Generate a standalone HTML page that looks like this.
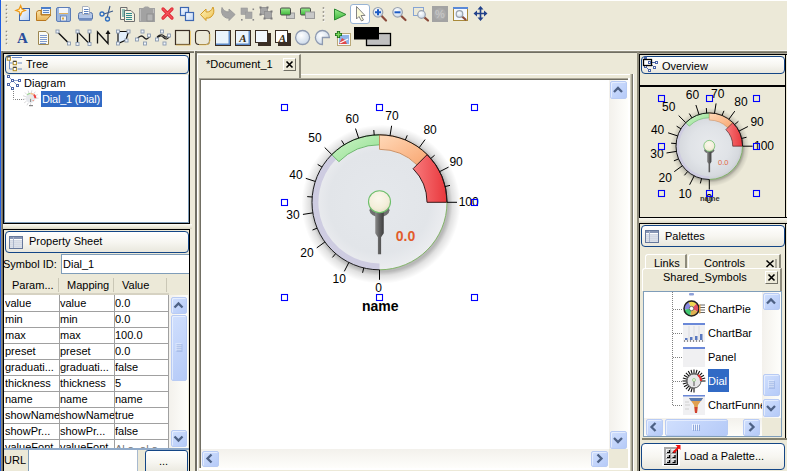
<!DOCTYPE html>
<html><head><meta charset="utf-8"><style>
*{margin:0;padding:0;box-sizing:border-box}
html,body{width:787px;height:471px;overflow:hidden;background:#ECE9D8;font-family:"Liberation Sans",sans-serif;font-size:11px;color:#000;position:relative}
.a{position:absolute}
svg{overflow:visible}
.hdr{position:absolute;border:1px solid #144686;border-radius:4px;background:linear-gradient(#FFFFFF,#F7F6F1 50%,#E9E7DD)}
.t{position:absolute;white-space:nowrap;font-size:11px;line-height:13px}
.sb{position:absolute;border:1px solid #B8CBF4;border-radius:2px;background:linear-gradient(135deg,#D0DFFD,#B5CAF8);box-shadow:inset 1px 1px 0 rgba(255,255,255,0.5)}
</style></head><body>
<div class="a" style="left:0px;top:0px;width:1px;height:471px;background:#1E5DE3"></div>
<div class="a" style="left:1px;top:0px;width:786px;height:1px;background:#FFFFFF"></div>
<svg class="a" style="left:0;top:0" width="787" height="50" font-family="Liberation Serif, serif">
<defs>
<linearGradient id="lb" x1="0" y1="0" x2="1" y2="1"><stop offset="0" stop-color="#FFFFFF"/><stop offset="1" stop-color="#B9D1F4"/></linearGradient>
<linearGradient id="gg" x1="0" y1="0" x2="0" y2="1"><stop offset="0" stop-color="#9BEA8F"/><stop offset="1" stop-color="#3DB83A"/></linearGradient>
<linearGradient id="yl" x1="0" y1="0" x2="1" y2="1"><stop offset="0" stop-color="#FFF6C0"/><stop offset="1" stop-color="#EDC050"/></linearGradient>
<linearGradient id="fo" x1="0" y1="0" x2="0" y2="1"><stop offset="0" stop-color="#FBE3A6"/><stop offset="1" stop-color="#E7B45A"/></linearGradient>
<radialGradient id="mg" cx="0.4" cy="0.35" r="0.7"><stop offset="0" stop-color="#FFFFFF"/><stop offset="1" stop-color="#C9D7E8"/></radialGradient>
</defs>
<rect x="6" y="5" width="2" height="2" fill="#FFFFFF"/><rect x="5.7" y="4.7" width="1.6" height="1.6" fill="#8F8C7E"/>
<rect x="6" y="9" width="2" height="2" fill="#FFFFFF"/><rect x="5.7" y="8.7" width="1.6" height="1.6" fill="#8F8C7E"/>
<rect x="6" y="13" width="2" height="2" fill="#FFFFFF"/><rect x="5.7" y="12.7" width="1.6" height="1.6" fill="#8F8C7E"/>
<rect x="6" y="17" width="2" height="2" fill="#FFFFFF"/><rect x="5.7" y="16.7" width="1.6" height="1.6" fill="#8F8C7E"/>
<rect x="6" y="21" width="2" height="2" fill="#FFFFFF"/><rect x="5.7" y="20.7" width="1.6" height="1.6" fill="#8F8C7E"/>
<rect x="6" y="31" width="2" height="2" fill="#FFFFFF"/><rect x="5.7" y="30.7" width="1.6" height="1.6" fill="#8F8C7E"/>
<rect x="6" y="35" width="2" height="2" fill="#FFFFFF"/><rect x="5.7" y="34.7" width="1.6" height="1.6" fill="#8F8C7E"/>
<rect x="6" y="39" width="2" height="2" fill="#FFFFFF"/><rect x="5.7" y="38.7" width="1.6" height="1.6" fill="#8F8C7E"/>
<rect x="6" y="43" width="2" height="2" fill="#FFFFFF"/><rect x="5.7" y="42.7" width="1.6" height="1.6" fill="#8F8C7E"/>
<rect x="323" y="7.5" width="2" height="2" fill="#FFFFFF"/><rect x="322.7" y="7.2" width="1.6" height="1.6" fill="#8F8C7E"/>
<rect x="323" y="11.5" width="2" height="2" fill="#FFFFFF"/><rect x="322.7" y="11.2" width="1.6" height="1.6" fill="#8F8C7E"/>
<rect x="323" y="15.5" width="2" height="2" fill="#FFFFFF"/><rect x="322.7" y="15.2" width="1.6" height="1.6" fill="#8F8C7E"/>
<rect x="323" y="19.5" width="2" height="2" fill="#FFFFFF"/><rect x="322.7" y="19.2" width="1.6" height="1.6" fill="#8F8C7E"/>
<rect x="19.5" y="8.5" width="10" height="12" fill="url(#lb)" stroke="#3C67B2"/>
<path d="M20.6,5.6 L22,9 L25.4,10.4 L22,11.8 L20.6,15.2 L19.2,11.8 L15.8,10.4 L19.2,9 Z" fill="#FFF3C8" stroke="#F09A18" stroke-width="1.2"/>
<rect x="41.5" y="7.5" width="9" height="7" fill="#EAF3FF" stroke="#B88A3C"/><rect x="41" y="7" width="10" height="2" fill="#4C7FCB"/><path d="M43,10.5h6M43,12.5h6" stroke="#5D86C4"/>
<path d="M36.5,12.5 Q37,10.5 39,10.5 L41,10.5 L41,15 L51,15 L46,20.5 L36.5,20.5 Z" fill="url(#fo)" stroke="#B9771E"/>
<rect x="56.5" y="7.5" width="14" height="14" rx="1.5" fill="#9DB6DC" stroke="#5C7DB8"/><rect x="59" y="8" width="9" height="6" fill="#F2F5FA"/><rect x="59" y="13" width="9" height="1" fill="#E0B060"/><rect x="60.5" y="16" width="6" height="5" fill="#F0F0F0" stroke="#5C7DB8" stroke-width="0.8"/><rect x="62" y="17.5" width="2" height="2" fill="#D9A640"/>
<rect x="78.5" y="12.5" width="14" height="7.5" rx="2" fill="#B3C6E6" stroke="#5473A9"/><rect x="79" y="18" width="13" height="2.5" fill="#6F8CC0"/>
<path d="M82.5,6.5 L88,6.5 L89.5,8 L89.5,14.5 L82.5,14.5 Z" fill="#FFFFFF" stroke="#A0A8B8" stroke-width="0.9"/><path d="M84,9.5h4.5M84,11.5h4.5M84,13.5h4.5" stroke="#4A74B8" stroke-width="0.9"/>
<circle cx="102" cy="14" r="2" fill="none" stroke="#2F6FC0" stroke-width="1.3"/><circle cx="107.5" cy="19" r="2" fill="none" stroke="#2F6FC0" stroke-width="1.3"/><path d="M104,14 L113,11 M107.2,17 L110,6" stroke="#3D5C8C" stroke-width="1.1"/>
<path d="M120.5,7.5 L127,7.5 L127,19.5 L120.5,19.5 Z" fill="#F4F2E2" stroke="#6E6E6E"/><path d="M124.5,10.5 L131,10.5 L134.5,14 L134.5,21.5 L124.5,21.5 Z" fill="#F4F2E2" stroke="#6E6E6E"/>
<path d="M122,10h3M122,12h3M122,14h3M122,16h3M126,13.5h6M126,15.5h6M126,17.5h6M126,19.5h6" stroke="#2F8A8A"/>
<path d="M139,8 L143,8 L145,6.5 L148,6.5 L150,8 L155,8 L155,22 L139,22 Z" fill="#A2A2A2"/><rect x="147" y="14" width="6" height="7" fill="#B4B4B4" stroke="#8A8A8A" stroke-width="0.8"/><path d="M140.5,9v12M153.5,9v4" stroke="#BDBDBD"/>
<path d="M163,9 L172,18 M172,9 L163,18" stroke="#E02834" stroke-width="3.2" stroke-linecap="round"/><path d="M163,9 L172,18 M172,9 L163,18" stroke="#F4555C" stroke-width="1.4" stroke-linecap="round"/>
<rect x="180.5" y="7.5" width="8" height="8" fill="url(#lb)" stroke="#3C67B2" stroke-width="1.2"/><rect x="185.5" y="12.5" width="8" height="8" fill="url(#lb)" stroke="#3C67B2" stroke-width="1.2"/>
<path d="M200.5,14.5 L206,9 L206,12 Q211,12.5 213,7 Q215.5,13 211,17 Q209,18.5 206,18 L206,20.5 Z" fill="url(#yl)" stroke="#D39A24"/>
<path d="M235,14.5 L229,9 L229,12 Q224,12 222,7.5 Q220.5,14 224.5,17 Q226.5,18.5 229,18 L229,20.5 Z" fill="#A4A4A4" stroke="#9A9A9A"/>
<rect x="241" y="8" width="6.5" height="6.5" fill="#A6A6A6" stroke="#999" stroke-width="0.6"/><rect x="245.5" y="12" width="6.5" height="6.5" fill="#A6A6A6" stroke="#999" stroke-width="0.6"/><rect x="241" y="19" width="1.6" height="1.6" fill="#888"/><rect x="252.5" y="8.5" width="1.6" height="1.6" fill="#888"/><rect x="252.5" y="19" width="1.6" height="1.6" fill="#888"/>
<rect x="260.5" y="7.5" width="7" height="7" fill="#A6A6A6" stroke="#8E8E8E" stroke-width="0.8"/><rect x="264.5" y="11.5" width="7" height="7" fill="#A6A6A6" stroke="#8E8E8E" stroke-width="0.8"/>
<rect x="259.5" y="6.5" width="2" height="2" fill="#7A7A7A"/>
<rect x="266.5" y="6.5" width="2" height="2" fill="#7A7A7A"/>
<rect x="259.5" y="13.5" width="2" height="2" fill="#7A7A7A"/>
<rect x="263.5" y="17.5" width="2" height="2" fill="#7A7A7A"/>
<rect x="270.5" y="10.5" width="2" height="2" fill="#7A7A7A"/>
<rect x="270.5" y="17.5" width="2" height="2" fill="#7A7A7A"/>
<rect x="286.5" y="13" width="8" height="5.5" fill="#C8C8C8" stroke="#9A9A9A"/><rect x="280.5" y="8" width="10" height="7" rx="1.2" fill="url(#gg)" stroke="#4A4A4A"/>
<rect x="300.5" y="8" width="10" height="7" rx="1.2" fill="url(#gg)" stroke="#4A4A4A"/><rect x="305.5" y="12" width="9" height="6.5" fill="#C8C8C8" stroke="#9A9A9A"/>
<path d="M334.5,9 L346,14.5 L334.5,20 Z" fill="url(#gg)" stroke="#2C8A32"/>
<rect x="350.5" y="4.5" width="19" height="19" rx="2.5" fill="#FFFFFF" stroke="#98B4D4"/>
<path d="M356.5,6.5 L356.5,19 L359,16.5 L361.5,21 L363.5,20 L361,15.5 L365,15.5 Z" fill="#FAFAD8" stroke="#777" stroke-width="0.9"/>
<path d="M380.9,15.2 L386,20.5" stroke="#8A4A3A" stroke-width="2.2" stroke-linecap="round"/><circle cx="378" cy="12.3" r="4.8" fill="url(#mg)" stroke="#9AA2AE" stroke-width="1.2"/><path d="M375,12.3h6M378,9.3v6" stroke="#1C5BC4" stroke-width="2"/>
<path d="M400.5,15.2 L405.5,20" stroke="#8A4A3A" stroke-width="2.2" stroke-linecap="round"/><circle cx="397.6" cy="12.3" r="4.8" fill="url(#mg)" stroke="#9AA2AE" stroke-width="1.2"/><path d="M394.5,12.3h6" stroke="#1C5BC4" stroke-width="2"/>
<rect x="413.5" y="7.5" width="10" height="8" fill="none" stroke="#1F5FD0" stroke-dasharray="1,1"/>
<path d="M423.8,16.8 L428,20.5" stroke="#8A4A3A" stroke-width="2.2" stroke-linecap="round"/><circle cx="421.5" cy="14.5" r="3.8" fill="url(#mg)" stroke="#9AA2AE" stroke-width="1.2"/>
<rect x="432" y="6" width="16" height="16" fill="#A3A3A3"/><circle cx="440" cy="14" r="6" fill="#ACACAC"/><text x="440" y="18" font-family="Liberation Sans" font-size="11" font-weight="bold" fill="#C4C4C4" text-anchor="middle">%</text>
<rect x="453.5" y="7.5" width="14" height="13" fill="#F4F8FF" stroke="#A98A3A"/><rect x="453" y="7" width="15" height="2" fill="#5A8AD8"/>
<path d="M461.5,16.0 L465.5,19.5" stroke="#8A4A3A" stroke-width="2.2" stroke-linecap="round"/><circle cx="459.5" cy="14" r="3.3" fill="url(#mg)" stroke="#9AA2AE" stroke-width="1.2"/>
<path d="M475.5,13.5 H486 M480.5,8 V19" stroke="#21418A" stroke-width="1.6"/><path d="M480.5,6 L477.5,9.5 L483.5,9.5 Z M480.5,21 L477.5,17.5 L483.5,17.5 Z M473.5,13.5 L477,10.5 L477,16.5 Z M487.5,13.5 L484,10.5 L484,16.5 Z" fill="#21418A"/>
<text x="22.5" y="43" font-size="15" font-weight="bold" fill="#2A4E9C" text-anchor="middle">A</text>
<path d="M38.5,31.5 L46,31.5 L48.5,34 L48.5,44.5 L38.5,44.5 Z" fill="#FBFBF6" stroke="#9C8650"/><path d="M40,35.5h7M40,37.5h7M40,39.5h7M40,41.5h7M40,43.5h6" stroke="#7F9BCF" stroke-width="1"/>
<path d="M58,32.5 L68.5,43" stroke="#111" stroke-width="1.4"/>
<rect x="56.0" y="30.0" width="3" height="3" fill="#F0F4FA" stroke="#8A9AB0" stroke-width="0.9"/><rect x="67.5" y="42.0" width="3" height="3" fill="#F0F4FA" stroke="#8A9AB0" stroke-width="0.9"/>
<path d="M77.5,44 L77.5,31.5 L89.5,44 L89.5,31.5" fill="none" stroke="#111" stroke-width="1.3"/>
<rect x="76.0" y="30.0" width="3" height="3" fill="#F0F4FA" stroke="#8A9AB0" stroke-width="0.9"/><rect x="88.0" y="30.0" width="3" height="3" fill="#F0F4FA" stroke="#8A9AB0" stroke-width="0.9"/><rect x="76.0" y="42.5" width="3" height="3" fill="#F0F4FA" stroke="#8A9AB0" stroke-width="0.9"/><rect x="88.0" y="42.5" width="3" height="3" fill="#F0F4FA" stroke="#8A9AB0" stroke-width="0.9"/>
<path d="M97.5,43.5 L97.5,32 L108,43.5 L108,32" fill="none" stroke="#111" stroke-width="1.3"/><path d="M105.5,34 L108,30 L110.5,34 Z" fill="#111"/>
<path d="M118,31.5 L128.5,31.5 L126,40 L118,43.5 Z" fill="#E4F0FC" stroke="#111" stroke-width="1.2"/>
<rect x="116.5" y="30.0" width="3" height="3" fill="#F0F4FA" stroke="#8A9AB0" stroke-width="0.9"/><rect x="127.0" y="30.0" width="3" height="3" fill="#F0F4FA" stroke="#8A9AB0" stroke-width="0.9"/><rect x="125.0" y="39.0" width="3" height="3" fill="#F0F4FA" stroke="#8A9AB0" stroke-width="0.9"/><rect x="116.5" y="42.0" width="3" height="3" fill="#F0F4FA" stroke="#8A9AB0" stroke-width="0.9"/>
<path d="M137,39 Q141,34 144,37.5 Q147,41 150,36" fill="none" stroke="#222" stroke-width="1.4"/>
<rect x="141.0" y="30.0" width="3" height="3" fill="#F0F4FA" stroke="#8A9AB0" stroke-width="0.9"/><rect x="147.5" y="34.0" width="3" height="3" fill="#F0F4FA" stroke="#8A9AB0" stroke-width="0.9"/><rect x="135.5" y="38.0" width="3" height="3" fill="#F0F4FA" stroke="#8A9AB0" stroke-width="0.9"/><rect x="143.5" y="42.0" width="3" height="3" fill="#F0F4FA" stroke="#8A9AB0" stroke-width="0.9"/>
<path d="M156.5,39 Q160,34 163.5,37.5 Q167,41 170,36 M157,37 Q161,33 164,36 Q167,39 169.5,34" fill="none" stroke="#222" stroke-width="1.1"/>
<rect x="160.5" y="30.0" width="3" height="3" fill="#F0F4FA" stroke="#8A9AB0" stroke-width="0.9"/><rect x="167.5" y="34.0" width="3" height="3" fill="#F0F4FA" stroke="#8A9AB0" stroke-width="0.9"/><rect x="155.5" y="38.0" width="3" height="3" fill="#F0F4FA" stroke="#8A9AB0" stroke-width="0.9"/><rect x="163.0" y="42.0" width="3" height="3" fill="#F0F4FA" stroke="#8A9AB0" stroke-width="0.9"/>
<rect x="175.5" y="30.5" width="14" height="14" fill="#ECE9D8" stroke="#3A2E24" stroke-width="1.2"/><path d="M176,45h14.5V31" fill="none" stroke="#F4C860" stroke-width="0.8"/>
<rect x="195.5" y="30.5" width="14" height="14" rx="3.5" fill="#ECE9D8" stroke="#3A2E24" stroke-width="1.1"/><path d="M209.8,34 V41 Q209.8,44.8 206,44.8 H199" fill="none" stroke="#F4C860" stroke-width="0.9"/>
<rect x="215" y="30" width="16" height="16" fill="#3A2E24"/><rect x="216" y="31" width="14" height="14" fill="#5C8AC8"/><rect x="216" y="31" width="12.5" height="12.5" fill="#EAF4FC"/>
<rect x="235" y="30" width="16" height="16" fill="#3A2E24"/><rect x="236" y="31" width="14" height="14" fill="#5C8AC8"/><rect x="236" y="31" width="12.5" height="12.5" fill="#EAF4FC"/><text x="243" y="42" font-size="11" font-style="italic" font-weight="bold" fill="#3A2E10" text-anchor="middle">A</text>
<rect x="258" y="33" width="13" height="13" fill="#3A2E24"/><rect x="255.5" y="30.5" width="12" height="12" fill="#F2F8FE" stroke="#3A2E24"/>
<rect x="278" y="33" width="13" height="13" fill="#3A2E24"/><rect x="275.5" y="30.5" width="12" height="12" fill="#FFFFFF" stroke="#3A2E24"/><text x="282.5" y="41.5" font-size="11" font-style="italic" font-weight="bold" fill="#3A2E10" text-anchor="middle">A</text>
<circle cx="302.6" cy="37.5" r="7" fill="url(#mg)" stroke="#8E9AB0" stroke-width="1.3"/>
<path d="M322.4,37.5 L322.4,30.5 A7,7 0 0 1 329.4,37.5 Z M322.4,37.5 L329.4,37.5 A7,7 0 1 1 322.4,30.5 Z" fill="none"/><path d="M329.4,37.5 L322.4,37.5 L322.4,44.5 A7,7 0 1 1 329.4,37.5 Z" fill="url(#mg)" stroke="#8E9AB0" stroke-width="1.3"/>
<rect x="337.5" y="33.5" width="13" height="12" fill="#F4F8FC" stroke="#B9A878"/><rect x="339" y="35" width="10" height="9" fill="#8FB4E8"/><path d="M339,44 L342,38 L345,40 L347,44 Z" fill="#E04848"/><path d="M340,43 L348,39" stroke="#fff" stroke-width="1.2"/>
<path d="M335,34.5h7M338.5,31v7" stroke="#1E6A1E" stroke-width="3.2"/><path d="M335.8,34.5h5.4M338.5,31.8v5.4" stroke="#7ADA5A" stroke-width="1.4"/>
<rect x="366.5" y="33.5" width="24" height="12" fill="#C0C0C0" stroke="#000" stroke-width="1.3"/><rect x="354" y="27" width="25" height="12.5" fill="#000"/>
</svg>
<div class="a" style="left:1px;top:50px;width:786px;height:1px;background:#F6F5EE"></div>
<div class="a" style="left:1px;top:51px;width:193px;height:2px;background:linear-gradient(#8E8B7C 50%,#716F64 50%)"></div>
<div class="a" style="left:1px;top:51px;width:2px;height:420px;background:linear-gradient(90deg,#8E8B7C 50%,#716F64 50%)"></div>
<div class="a" style="left:3px;top:53px;width:187px;height:171px;border:1px solid #000;background:#ECE9D8"></div>
<div class="hdr" style="left:5px;top:55px;width:184px;height:19px;"></div>
<div class="t" style="left:26px;top:58px;">Tree</div>
<div class="a" style="left:4px;top:74px;width:185px;height:149px;background:#fff;border:1px solid #7F9DB9;border-top-color:#ECE9D8;border-left:none"></div>
<div class="a" style="left:4px;top:75px;width:1px;height:148px;background:#7F9DB9"></div>
<div class="t" style="left:24px;top:77px;">Diagram</div>
<div class="a" style="left:41px;top:91px;width:61px;height:16px;background:#316AC5"></div>
<div class="t" style="left:42px;top:93px;color:#fff;letter-spacing:-0.2px">Dial_1 (Dial)</div>
<div class="a" style="left:3px;top:229px;width:187px;height:242px;border:1px solid #000;border-bottom:none;background:#ECE9D8"></div>
<div class="hdr" style="left:5px;top:231px;width:184px;height:22px;"></div>
<div class="t" style="left:29px;top:235px;">Property Sheet</div>
<div class="a" style="left:3px;top:224px;width:189px;height:5px;background:linear-gradient(#FBFAF4,#ECE9D8 60%,#D8D4C4)"></div>
<div class="t" style="left:3px;top:258px;">Symbol ID:</div>
<div class="a" style="left:61px;top:254px;width:128px;height:20px;background:#fff;border:1px solid #7F9DB9;border-right:none"></div>
<div class="t" style="left:63px;top:258px;">Dial_1</div>
<div class="a" style="left:4px;top:275px;width:165px;height:20px;background:#ECE9D8;border-bottom:2px solid #D6D2C2"></div>
<div class="a" style="left:58px;top:278px;width:1px;height:14px;background:#CAC7B6"></div>
<div class="a" style="left:113px;top:278px;width:1px;height:14px;background:#CAC7B6"></div>
<div class="a" style="left:166px;top:278px;width:1px;height:14px;background:#CAC7B6"></div>
<div class="t" style="left:12px;top:279px;">Param...</div>
<div class="t" style="left:67px;top:279px;">Mapping</div>
<div class="t" style="left:122px;top:279px;">Value</div>
<div class="a" style="left:4px;top:295px;width:165px;height:153px;background:#fff"></div>
<div class="t" style="left:5px;top:297px;width:54px;overflow:hidden">value</div>
<div class="t" style="left:60px;top:297px;width:54px;overflow:hidden">value</div>
<div class="t" style="left:115px;top:297px;width:53px;overflow:hidden">0.0</div>
<div class="a" style="left:4px;top:311px;width:165px;height:1px;background:#A0A0A0"></div>
<div class="t" style="left:5px;top:313px;width:54px;overflow:hidden">min</div>
<div class="t" style="left:60px;top:313px;width:54px;overflow:hidden">min</div>
<div class="t" style="left:115px;top:313px;width:53px;overflow:hidden">0.0</div>
<div class="a" style="left:4px;top:327px;width:165px;height:1px;background:#A0A0A0"></div>
<div class="t" style="left:5px;top:329px;width:54px;overflow:hidden">max</div>
<div class="t" style="left:60px;top:329px;width:54px;overflow:hidden">max</div>
<div class="t" style="left:115px;top:329px;width:53px;overflow:hidden">100.0</div>
<div class="a" style="left:4px;top:343px;width:165px;height:1px;background:#A0A0A0"></div>
<div class="t" style="left:5px;top:345px;width:54px;overflow:hidden">preset</div>
<div class="t" style="left:60px;top:345px;width:54px;overflow:hidden">preset</div>
<div class="t" style="left:115px;top:345px;width:53px;overflow:hidden">0.0</div>
<div class="a" style="left:4px;top:359px;width:165px;height:1px;background:#A0A0A0"></div>
<div class="t" style="left:5px;top:361px;width:54px;overflow:hidden">graduati...</div>
<div class="t" style="left:60px;top:361px;width:54px;overflow:hidden">graduati...</div>
<div class="t" style="left:115px;top:361px;width:53px;overflow:hidden">false</div>
<div class="a" style="left:4px;top:375px;width:165px;height:1px;background:#A0A0A0"></div>
<div class="t" style="left:5px;top:377px;width:54px;overflow:hidden">thickness</div>
<div class="t" style="left:60px;top:377px;width:54px;overflow:hidden">thickness</div>
<div class="t" style="left:115px;top:377px;width:53px;overflow:hidden">5</div>
<div class="a" style="left:4px;top:391px;width:165px;height:1px;background:#A0A0A0"></div>
<div class="t" style="left:5px;top:393px;width:54px;overflow:hidden">name</div>
<div class="t" style="left:60px;top:393px;width:54px;overflow:hidden">name</div>
<div class="t" style="left:115px;top:393px;width:53px;overflow:hidden">name</div>
<div class="a" style="left:4px;top:407px;width:165px;height:1px;background:#A0A0A0"></div>
<div class="t" style="left:5px;top:409px;width:54px;overflow:hidden">showName</div>
<div class="t" style="left:60px;top:409px;width:54px;overflow:hidden">showName</div>
<div class="t" style="left:115px;top:409px;width:53px;overflow:hidden">true</div>
<div class="a" style="left:4px;top:423px;width:165px;height:1px;background:#A0A0A0"></div>
<div class="t" style="left:5px;top:425px;width:54px;overflow:hidden">showPr...</div>
<div class="t" style="left:60px;top:425px;width:54px;overflow:hidden">showPr...</div>
<div class="t" style="left:115px;top:425px;width:53px;overflow:hidden">false</div>
<div class="a" style="left:4px;top:439px;width:165px;height:1px;background:#A0A0A0"></div>
<div class="t" style="left:5px;top:441px;width:54px;overflow:hidden">valueFont</div>
<div class="t" style="left:60px;top:441px;width:54px;overflow:hidden">valueFont</div>
<div class="t" style="left:115px;top:441px;width:53px;overflow:hidden"><span style='color:#7A7A7A;position:relative;top:2px'>Al&nbsp;a&nbsp;&nbsp;al&nbsp;a</span></div>
<div class="a" style="left:4px;top:455px;width:165px;height:1px;background:#A0A0A0"></div>
<div class="a" style="left:59px;top:295px;width:1px;height:153px;background:#A0A0A0"></div>
<div class="a" style="left:114px;top:295px;width:1px;height:153px;background:#A0A0A0"></div>
<div class="a" style="left:168px;top:295px;width:1px;height:153px;background:#A0A0A0"></div>
<div class="a" style="left:4px;top:448px;width:185px;height:23px;background:#ECE9D8"></div>
<div class="a" style="left:4px;top:448px;width:185px;height:2px;background:#8FA9C8"></div>
<div class="t" style="left:4px;top:454px;">URL</div>
<div class="a" style="left:28px;top:450px;width:110px;height:21px;background:#fff;border-left:1px solid #7F9DB9;border-right:1px solid #A7B9CF"></div>
<div class="a" style="left:169px;top:295px;width:19px;height:153px;background:linear-gradient(90deg,#F3F1EC,#FEFEFB)"></div>
<div class="sb" style="left:171px;top:297px;width:16px;height:17px"><svg width="14" height="15" style="position:absolute;left:0;top:0"><g fill="none" stroke="#4D6185" stroke-width="2.3"><polyline points="2.5,9.5 6.5,5.5 10.5,9.5" /></g></svg></div>
<div class="sb" style="left:171px;top:315px;width:16px;height:66px"><svg width="14" height="64" style="position:absolute;left:0;top:0"><g fill="none" stroke="#4D6185" stroke-width="2.3"><line x1="3.5" y1="28.0" x2="9.5" y2="28.0" stroke-width="1" stroke="#EEF4FE"/><line x1="4.5" y1="29.0" x2="10.5" y2="29.0" stroke-width="1" stroke="#8FA8DC"/><line x1="3.5" y1="30.0" x2="9.5" y2="30.0" stroke-width="1" stroke="#EEF4FE"/><line x1="4.5" y1="31.0" x2="10.5" y2="31.0" stroke-width="1" stroke="#8FA8DC"/><line x1="3.5" y1="32.0" x2="9.5" y2="32.0" stroke-width="1" stroke="#EEF4FE"/><line x1="4.5" y1="33.0" x2="10.5" y2="33.0" stroke-width="1" stroke="#8FA8DC"/><line x1="3.5" y1="34.0" x2="9.5" y2="34.0" stroke-width="1" stroke="#EEF4FE"/><line x1="4.5" y1="35.0" x2="10.5" y2="35.0" stroke-width="1" stroke="#8FA8DC"/></g></svg></div>
<div class="sb" style="left:171px;top:430px;width:16px;height:17px"><svg width="14" height="15" style="position:absolute;left:0;top:0"><g fill="none" stroke="#4D6185" stroke-width="2.3"><polyline points="2.5,5.5 6.5,9.5 10.5,5.5" /></g></svg></div>
<div class="hdr" style="left:145px;top:450px;width:43px;height:24px;border-radius:3px"></div>
<div class="t" style="left:159px;top:455px;">...</div>
<div class="a" style="left:189px;top:229px;width:1px;height:242px;background:#000"></div>
<div class="a" style="left:195px;top:51px;width:443px;height:2px;background:linear-gradient(#8E8B7C 50%,#716F64 50%)"></div>
<div class="a" style="left:195px;top:51px;width:2px;height:420px;background:#716F64"></div>
<div class="a" style="left:197px;top:53px;width:441px;height:418px;background:#ECE9D8"></div>
<div class="a" style="left:197px;top:54px;width:1px;height:417px;background:#FFFFFF"></div>
<div class="a" style="left:197px;top:54px;width:104px;height:24px;border-top:1px solid #fff;border-left:1px solid #fff;border-right:2px solid #8E8B7C;background:#ECE9D8"></div>
<div class="a" style="left:301px;top:74px;width:332px;height:1px;background:#fff"></div>
<div class="t" style="left:206px;top:58px;">*Document_1</div>
<div class="a" style="left:283px;top:58px;width:13px;height:13px;border:1px solid;border-color:#fff #716F64 #716F64 #fff"></div>
<svg class="a" style="left:283px;top:58px" width="13" height="13"><path d="M3.5,3.5 L9.5,9.5 M9.5,3.5 L3.5,9.5" stroke="#000" stroke-width="1.6"/></svg>
<div class="a" style="left:199px;top:78px;width:431px;height:392px;border-top:1px solid #ACA899;border-left:1px solid #ACA899;box-shadow:inset 1px 1px 0 #716F64;background:#fff"></div>
<div class="a" style="left:628px;top:78px;width:2px;height:392px;background:#fff"></div>
<div class="a" style="left:199px;top:468px;width:431px;height:2px;background:#fff"></div>
<div class="a" style="left:630px;top:74px;width:1px;height:397px;background:#D0CDBC"></div>
<div class="a" style="left:631px;top:74px;width:1px;height:397px;background:#A9A695"></div>
<div class="a" style="left:632px;top:74px;width:1px;height:397px;background:#76746A"></div>
<div class="a" style="left:633px;top:74px;width:1px;height:397px;background:#FFFFFF"></div>
<div class="a" style="left:609px;top:80px;width:19px;height:369px;background:linear-gradient(90deg,#F3F1EC,#FEFEFB)"></div>
<div class="sb" style="left:610px;top:81px;width:17px;height:18px"><svg width="15" height="16" style="position:absolute;left:0;top:0"><g fill="none" stroke="#4D6185" stroke-width="2.3"><polyline points="3.0,10.0 7.0,6.0 11.0,10.0" /></g></svg></div>
<div class="sb" style="left:610px;top:431px;width:17px;height:18px"><svg width="15" height="16" style="position:absolute;left:0;top:0"><g fill="none" stroke="#4D6185" stroke-width="2.3"><polyline points="3.0,6.0 7.0,10.0 11.0,6.0" /></g></svg></div>
<div class="a" style="left:201px;top:449px;width:408px;height:19px;background:linear-gradient(#F3F1EC,#FEFEFB)"></div>
<div class="sb" style="left:202px;top:451px;width:17px;height:16px"><svg width="15" height="14" style="position:absolute;left:0;top:0"><g fill="none" stroke="#4D6185" stroke-width="2.3"><polyline points="8.5,2.5 4.5,6.5 8.5,10.5" /></g></svg></div>
<div class="sb" style="left:591px;top:451px;width:17px;height:16px"><svg width="15" height="14" style="position:absolute;left:0;top:0"><g fill="none" stroke="#4D6185" stroke-width="2.3"><polyline points="5.5,2.5 9.5,6.5 5.5,10.5" /></g></svg></div>
<div class="a" style="left:609px;top:449px;width:19px;height:19px;background:#ECE9D8"></div>
<div class="a" style="left:637px;top:51px;width:150px;height:3px;background:linear-gradient(#8E8B7C 33%,#716F64 33%,#716F64 66%,#ACA899 66%)"></div>
<div class="a" style="left:637px;top:51px;width:2px;height:420px;background:#8E8B7C"></div>
<div class="a" style="left:639px;top:54px;width:1px;height:417px;background:#000"></div>
<div class="a" style="left:639px;top:54px;width:148px;height:164px;border:1px solid #000;border-right:none;border-bottom:1px solid #000;background:#ECE9D8"></div>
<div class="a" style="left:785px;top:54px;width:1px;height:164px;background:#000"></div>
<div class="hdr" style="left:641px;top:56px;width:144px;height:18px;"></div>
<div class="t" style="left:662px;top:60px;">Overview</div>
<div class="a" style="left:640px;top:85px;width:146px;height:2px;background:#000"></div>
<div class="a" style="left:639px;top:218px;width:148px;height:5px;background:linear-gradient(#FBFAF4,#ECE9D8 60%,#D8D4C4)"></div>
<div class="a" style="left:639px;top:223px;width:148px;height:216px;border-top:1px solid #000;border-left:1px solid #000;background:#ECE9D8"></div>
<div class="a" style="left:785px;top:223px;width:1px;height:216px;background:#000"></div>
<div class="hdr" style="left:641px;top:225px;width:144px;height:22px;"></div>
<div class="t" style="left:665px;top:230px;">Palettes</div>
<div class="a" style="left:645px;top:254px;width:42px;height:16px;border-top:1px solid #fff;border-left:1px solid #fff;border-right:2px solid #8E8B7C;border-top-left-radius:3px"></div>
<div class="t" style="left:654px;top:257px;">Links</div>
<div class="a" style="left:688px;top:254px;width:93px;height:16px;border-top:1px solid #fff;border-left:1px solid #fff;border-right:2px solid #8E8B7C;border-top-left-radius:3px"></div>
<div class="t" style="left:704px;top:257px;">Controls</div>
<svg class="a" style="left:764px;top:259px" width="13" height="10"><path d="M2.5,1.5 L9.5,8 M9.5,1.5 L2.5,8" stroke="#000" stroke-width="1.5"/><path d="M12,0V10" stroke="#716F64"/></svg>
<div class="a" style="left:642px;top:268px;width:140px;height:23px;border-top:1px solid #fff;border-left:1px solid #fff;border-right:2px solid #8E8B7C;background:#ECE9D8;border-top-left-radius:3px"></div>
<div class="t" style="left:663px;top:271px;">Shared_Symbols</div>
<div class="a" style="left:765px;top:271px;width:13px;height:13px;border:1px solid;border-color:#fff #716F64 #716F64 #fff"></div>
<svg class="a" style="left:765px;top:271px" width="13" height="13"><path d="M3.5,3.5 L9.5,9.5 M9.5,3.5 L3.5,9.5" stroke="#000" stroke-width="1.6"/></svg>
<div class="a" style="left:643px;top:291px;width:139px;height:146px;background:#fff;border:1px solid #7F9DB9"></div>
<div class="t" style="left:708px;top:303px;">ChartPie</div>
<div class="t" style="left:708px;top:327px;">ChartBar</div>
<div class="t" style="left:708px;top:351px;">Panel</div>
<div class="a" style="left:708px;top:369px;width:21px;height:23px;background:#316AC5"></div>
<div class="t" style="left:708px;top:375px;color:#fff">Dial</div>
<div class="t" style="left:708px;top:399px;">ChartFunnel</div>
<div class="a" style="left:762px;top:292px;width:19px;height:126px;background:linear-gradient(90deg,#F3F1EC,#FEFEFB)"></div>
<div class="sb" style="left:763px;top:293px;width:17px;height:17px"><svg width="15" height="15" style="position:absolute;left:0;top:0"><g fill="none" stroke="#4D6185" stroke-width="2.3"><polyline points="3.0,9.5 7.0,5.5 11.0,9.5" /></g></svg></div>
<div class="sb" style="left:763px;top:374px;width:17px;height:22px"><svg width="15" height="20" style="position:absolute;left:0;top:0"><g fill="none" stroke="#4D6185" stroke-width="2.3"><line x1="4.0" y1="6.0" x2="10.0" y2="6.0" stroke-width="1" stroke="#EEF4FE"/><line x1="5.0" y1="7.0" x2="11.0" y2="7.0" stroke-width="1" stroke="#8FA8DC"/><line x1="4.0" y1="8.0" x2="10.0" y2="8.0" stroke-width="1" stroke="#EEF4FE"/><line x1="5.0" y1="9.0" x2="11.0" y2="9.0" stroke-width="1" stroke="#8FA8DC"/><line x1="4.0" y1="10.0" x2="10.0" y2="10.0" stroke-width="1" stroke="#EEF4FE"/><line x1="5.0" y1="11.0" x2="11.0" y2="11.0" stroke-width="1" stroke="#8FA8DC"/><line x1="4.0" y1="12.0" x2="10.0" y2="12.0" stroke-width="1" stroke="#EEF4FE"/><line x1="5.0" y1="13.0" x2="11.0" y2="13.0" stroke-width="1" stroke="#8FA8DC"/></g></svg></div>
<div class="sb" style="left:763px;top:399px;width:17px;height:18px"><svg width="15" height="16" style="position:absolute;left:0;top:0"><g fill="none" stroke="#4D6185" stroke-width="2.3"><polyline points="3.0,6.0 7.0,10.0 11.0,6.0" /></g></svg></div>
<div class="a" style="left:644px;top:418px;width:118px;height:18px;background:linear-gradient(#F3F1EC,#FEFEFB)"></div>
<div class="sb" style="left:646px;top:419px;width:17px;height:17px"><svg width="15" height="15" style="position:absolute;left:0;top:0"><g fill="none" stroke="#4D6185" stroke-width="2.3"><polyline points="8.5,3.0 4.5,7.0 8.5,11.0" /></g></svg></div>
<div class="sb" style="left:665px;top:419px;width:63px;height:17px"><svg width="61" height="15" style="position:absolute;left:0;top:0"><g fill="none" stroke="#4D6185" stroke-width="2.3"><line y1="4.0" x1="26.5" y2="10.0" x2="26.5" stroke-width="1" stroke="#EEF4FE"/><line y1="5.0" x1="27.5" y2="11.0" x2="27.5" stroke-width="1" stroke="#8FA8DC"/><line y1="4.0" x1="28.5" y2="10.0" x2="28.5" stroke-width="1" stroke="#EEF4FE"/><line y1="5.0" x1="29.5" y2="11.0" x2="29.5" stroke-width="1" stroke="#8FA8DC"/><line y1="4.0" x1="30.5" y2="10.0" x2="30.5" stroke-width="1" stroke="#EEF4FE"/><line y1="5.0" x1="31.5" y2="11.0" x2="31.5" stroke-width="1" stroke="#8FA8DC"/><line y1="4.0" x1="32.5" y2="10.0" x2="32.5" stroke-width="1" stroke="#EEF4FE"/><line y1="5.0" x1="33.5" y2="11.0" x2="33.5" stroke-width="1" stroke="#8FA8DC"/></g></svg></div>
<div class="sb" style="left:743px;top:419px;width:17px;height:17px"><svg width="15" height="15" style="position:absolute;left:0;top:0"><g fill="none" stroke="#4D6185" stroke-width="2.3"><polyline points="5.5,3.0 9.5,7.0 5.5,11.0" /></g></svg></div>
<div class="a" style="left:762px;top:418px;width:19px;height:18px;background:#ECE9D8"></div>
<div class="a" style="left:642px;top:438px;width:145px;height:2px;background:#85826F"></div>
<div class="a" style="left:785px;top:223px;width:1px;height:215px;background:#000"></div>
<div class="hdr" style="left:641px;top:443px;width:144px;height:27px;"></div>
<div class="t" style="left:684px;top:450px;">Load a Palette...</div>
<svg class="a" style="left:0;top:0" width="787" height="471">
<path d="M9.5,60 V69 M9.5,63 H13 M9.5,69 H13 M12,57.5 H22 M17.5,63 H22 M17.5,69 H22" stroke="#6E8CC4" stroke-width="1" fill="none"/>
<rect x="7.199999999999999" y="56.8" width="3.2" height="3.4" fill="#fff" stroke="#B08A20" stroke-width="1"/><rect x="7.199999999999999" y="56.3" width="3.2" height="1" fill="#1A2A50"/>
<rect x="13.2" y="61.3" width="3.2" height="3.4" fill="#fff" stroke="#B08A20" stroke-width="1"/><rect x="13.2" y="60.8" width="3.2" height="1" fill="#1A2A50"/>
<rect x="13.2" y="67.3" width="3.2" height="3.4" fill="#fff" stroke="#B08A20" stroke-width="1"/><rect x="13.2" y="66.8" width="3.2" height="1" fill="#1A2A50"/>
<path d="M8.5,76.5 L12.5,80.5 L19.5,80.5 M12.5,80.5 L8.5,84.5 L12.5,88.5 M12.5,80.5 L17.5,85.5" stroke="#7088C0" stroke-width="0.8" fill="none"/>
<rect x="7.5" y="75.5" width="2" height="2" fill="#FFFFFF" stroke="#4A64A8" stroke-width="1"/>
<rect x="11.5" y="79.5" width="2" height="2" fill="#FFFFFF" stroke="#4A64A8" stroke-width="1"/>
<rect x="18.5" y="79.5" width="2" height="2" fill="#FFFFFF" stroke="#4A64A8" stroke-width="1"/>
<rect x="7.5" y="83.5" width="2" height="2" fill="#FFFFFF" stroke="#4A64A8" stroke-width="1"/>
<rect x="16.5" y="84.5" width="2" height="2" fill="#FFFFFF" stroke="#4A64A8" stroke-width="1"/>
<rect x="11.5" y="87.5" width="2" height="2" fill="#FFFFFF" stroke="#4A64A8" stroke-width="1"/>
<path d="M13.5,91 V99.5 H24" stroke="#808080" stroke-width="1" stroke-dasharray="1,1" fill="none"/>
<g stroke="#C8C8CC" stroke-width="0.7"><line x1="30.60" y1="103.20" x2="30.60" y2="106.20"/><line x1="28.33" y1="102.66" x2="26.97" y2="105.33"/><line x1="26.55" y1="101.14" x2="24.13" y2="102.90"/><line x1="25.66" y1="98.98" x2="22.70" y2="99.45"/><line x1="25.84" y1="96.65" x2="22.99" y2="95.73"/><line x1="27.06" y1="94.66" x2="24.94" y2="92.54"/><line x1="29.05" y1="93.44" x2="28.13" y2="90.59"/><line x1="31.38" y1="93.26" x2="31.85" y2="90.30"/><line x1="33.54" y1="94.15" x2="35.30" y2="91.73"/><line x1="35.06" y1="95.93" x2="37.73" y2="94.57"/><line x1="35.60" y1="98.20" x2="38.60" y2="98.20"/></g>
<circle cx="30.6" cy="98.2" r="4.8" fill="#E6E8EC"/><path d="M27.2,94.8 A4.8,4.8 0 0 1 30.6,93.4" stroke="#9BD48F" stroke-width="1.3" fill="none"/><path d="M30.6,93.4 A4.8,4.8 0 0 1 34,94.8" stroke="#F7B98A" stroke-width="1.5" fill="none"/><path d="M34,94.8 A4.8,4.8 0 0 1 35.4,98.2" stroke="#EE4040" stroke-width="2" fill="none"/><path d="M30.6,98.5V102" stroke="#7A7A7A" stroke-width="0.9"/><circle cx="30.6" cy="97.8" r="0.9" fill="#F4F0C0"/><rect x="29" y="105" width="4" height="1.2" fill="#888"/><rect x="32.5" y="100" width="1.5" height="1" fill="#F0A090"/>
<rect x="9.5" y="236.5" width="13" height="12" fill="#FFFFFF" stroke="#66789C"/>
<rect x="10" y="237" width="12" height="2" fill="#8896B4"/>
<rect x="10" y="240.5" width="12" height="0.9" fill="#A9B4CA"/>
<rect x="10" y="242.5" width="12" height="0.9" fill="#A9B4CA"/>
<rect x="10" y="244.5" width="12" height="0.9" fill="#A9B4CA"/>
<rect x="10" y="246.5" width="12" height="0.9" fill="#A9B4CA"/>
<rect x="13" y="237" width="1" height="11" fill="#A9B4CA"/>
<rect x="645.5" y="230.5" width="13" height="12" fill="#FFFFFF" stroke="#66789C"/>
<rect x="646" y="231" width="12" height="2" fill="#8896B4"/>
<rect x="646" y="234.5" width="12" height="0.9" fill="#A9B4CA"/>
<rect x="646" y="236.5" width="12" height="0.9" fill="#A9B4CA"/>
<rect x="646" y="238.5" width="12" height="0.9" fill="#A9B4CA"/>
<rect x="646" y="240.5" width="12" height="0.9" fill="#A9B4CA"/>
<rect x="649" y="231" width="1" height="11" fill="#A9B4CA"/>
<path d="M649.5,62.5 L656.5,62.5 M645.5,66.5 L649.5,70.5 M649.5,62.5 L654.5,67.5" stroke="#4A64A8" stroke-width="1" fill="none"/>
<rect x="644.5" y="57" width="2" height="2" fill="#FFFFFF" stroke="#4A64A8" stroke-width="1"/>
<rect x="655.5" y="61.5" width="2" height="2" fill="#FFFFFF" stroke="#4A64A8" stroke-width="1"/>
<rect x="644.5" y="65.5" width="2" height="2" fill="#FFFFFF" stroke="#4A64A8" stroke-width="1"/>
<rect x="653.5" y="66.5" width="2" height="2" fill="#FFFFFF" stroke="#4A64A8" stroke-width="1"/>
<rect x="648.5" y="69.5" width="2" height="2" fill="#FFFFFF" stroke="#4A64A8" stroke-width="1"/>
<rect x="643.5" y="59.5" width="8" height="6" fill="#fff" stroke="#000" stroke-width="1.3"/><rect x="648.5" y="61.5" width="2" height="2" fill="#FFFFFF" stroke="#4A64A8" stroke-width="1"/>
<rect x="662" y="445" width="18" height="21" fill="#FFFFFF"/><rect x="664" y="447" width="14" height="18" fill="#A8A8A8"/><path d="M664,464.5 H677.5 V447" fill="none" stroke="#000" stroke-width="1"/>
<rect x="666.0" y="449" width="4" height="4" fill="#C8C8C8"/><path d="M666.0,449.5 H670.0 M666.5,449 V453" stroke="#F0F0F0" stroke-width="1"/><path d="M667.0,452.5 H670.0 M669.5,450 V453" stroke="#000" stroke-width="1.2"/>
<rect x="671.5" y="449" width="4" height="4" fill="#C8C8C8"/><path d="M671.5,449.5 H675.5 M672.0,449 V453" stroke="#F0F0F0" stroke-width="1"/><path d="M672.5,452.5 H675.5 M675.0,450 V453" stroke="#000" stroke-width="1.2"/>
<rect x="666.0" y="454" width="4" height="4" fill="#C8C8C8"/><path d="M666.0,454.5 H670.0 M666.5,454 V458" stroke="#F0F0F0" stroke-width="1"/><path d="M667.0,457.5 H670.0 M669.5,455 V458" stroke="#000" stroke-width="1.2"/>
<rect x="671.5" y="454" width="4" height="4" fill="#C8C8C8"/><path d="M671.5,454.5 H675.5 M672.0,454 V458" stroke="#F0F0F0" stroke-width="1"/><path d="M672.5,457.5 H675.5 M675.0,455 V458" stroke="#000" stroke-width="1.2"/>
<rect x="666.0" y="459" width="4" height="4" fill="#C8C8C8"/><path d="M666.0,459.5 H670.0 M666.5,459 V463" stroke="#F0F0F0" stroke-width="1"/><path d="M667.0,462.5 H670.0 M669.5,460 V463" stroke="#000" stroke-width="1.2"/>
<rect x="671.5" y="459" width="4" height="4" fill="#C8C8C8"/><path d="M671.5,459.5 H675.5 M672.0,459 V463" stroke="#F0F0F0" stroke-width="1"/><path d="M672.5,462.5 H675.5 M675.0,460 V463" stroke="#000" stroke-width="1.2"/>
<path d="M673.5,452.5 L679,447" stroke="#F01010" stroke-width="2"/><path d="M675.5,445 L680.5,445 L680.5,450 Z" fill="#F01010"/>
<path d="M672.5,292 V406" stroke="#808080" stroke-dasharray="1,1" fill="none"/>
<path d="M673,309.5 H682" stroke="#808080" stroke-dasharray="1,1" fill="none"/>
<path d="M673,333.5 H682" stroke="#808080" stroke-dasharray="1,1" fill="none"/>
<path d="M673,357.5 H682" stroke="#808080" stroke-dasharray="1,1" fill="none"/>
<path d="M673,381.5 H682" stroke="#808080" stroke-dasharray="1,1" fill="none"/>
<path d="M673,405.5 H682" stroke="#808080" stroke-dasharray="1,1" fill="none"/>
<rect x="689" y="293" width="5" height="2.5" rx="1" fill="#8EA0D8"/>
<path d="M691.5,308.5 L688.21,301.76 A7.5,7.5 0 0 1 696.90,303.29 Z" fill="#F0D850"/>
<path d="M691.5,308.5 L696.90,303.29 A7.5,7.5 0 0 1 698.12,312.02 Z" fill="#E05060"/>
<path d="M691.5,308.5 L698.12,312.02 A7.5,7.5 0 0 1 690.20,315.89 Z" fill="#E0B050"/>
<path d="M691.5,308.5 L690.20,315.89 A7.5,7.5 0 0 1 684.07,309.54 Z" fill="#40C870"/>
<path d="M691.5,308.5 L684.07,309.54 A7.5,7.5 0 0 1 688.21,301.76 Z" fill="#8888E0"/>
<circle cx="691.5" cy="308.5" r="7.5" fill="none" stroke="#222" stroke-width="1.5"/><circle cx="691.5" cy="308.5" r="2.2" fill="#fff" stroke="#333" stroke-width="0.6"/>
<path d="M700,305h5M700,307.5h5M700,310h5M700,312.5h5" stroke="#555" stroke-width="0.9"/><rect x="699" y="304.5" width="1.5" height="9" fill="#E0A040"/>
<rect x="683" y="323" width="22" height="19" fill="#F0F0F2"/><rect x="683" y="323" width="22" height="2" fill="#6A88D8"/>
<rect x="685" y="338" width="2.5" height="2" fill="#5A78C0"/>
<rect x="690" y="337" width="2.5" height="3" fill="#5A78C0"/>
<rect x="695" y="336" width="2.5" height="4" fill="#5A78C0"/>
<rect x="700" y="334" width="2.5" height="6" fill="#5A78C0"/>
<path d="M684,341h20" stroke="#333" stroke-dasharray="1,2"/><path d="M689,326v14M694,326v14M699,326v14" stroke="#DCDCE0"/>
<rect x="683" y="347" width="22" height="20" fill="#F0F0F2"/><rect x="683" y="347" width="22" height="2" fill="#6A88D8"/>
<g stroke="#111" stroke-width="1.1">
<line x1="694.0" y1="388.0" x2="694.0" y2="392.5"/>
<line x1="692.2" y1="387.8" x2="691.0" y2="392.1"/>
<line x1="690.5" y1="387.1" x2="688.2" y2="391.0"/>
<line x1="689.1" y1="385.9" x2="685.9" y2="389.1"/>
<line x1="687.9" y1="384.5" x2="684.0" y2="386.8"/>
<line x1="687.2" y1="382.8" x2="682.9" y2="384.0"/>
<line x1="687.0" y1="381.0" x2="682.5" y2="381.0"/>
<line x1="687.2" y1="379.2" x2="682.9" y2="378.0"/>
<line x1="687.9" y1="377.5" x2="684.0" y2="375.2"/>
<line x1="689.1" y1="376.1" x2="685.9" y2="372.9"/>
<line x1="690.5" y1="374.9" x2="688.2" y2="371.0"/>
<line x1="692.2" y1="374.2" x2="691.0" y2="369.9"/>
<line x1="694.0" y1="374.0" x2="694.0" y2="369.5"/>
<line x1="695.8" y1="374.2" x2="697.0" y2="369.9"/>
<line x1="697.5" y1="374.9" x2="699.8" y2="371.0"/>
<line x1="698.9" y1="376.1" x2="702.1" y2="372.9"/>
<line x1="700.1" y1="377.5" x2="704.0" y2="375.2"/>
<line x1="700.8" y1="379.2" x2="705.1" y2="378.0"/>
<line x1="701.0" y1="381.0" x2="705.5" y2="381.0"/>
</g><circle cx="694" cy="381" r="7" fill="#E6E6E8" stroke="#333" stroke-width="0.8"/><path d="M698,375 A7,7 0 0 1 701,381" stroke="#E03030" stroke-width="2" fill="none"/><circle cx="694" cy="380" r="1.5" fill="#F4F0D8" stroke="#6CBF6A" stroke-width="0.6"/><path d="M694,381.5V386" stroke="#555"/>
<rect x="683" y="395" width="22" height="20" fill="#F0F0F2"/><rect x="683" y="395" width="22" height="1.5" fill="#6A88D8"/><path d="M689,398 L703,398 L698,405 L697,413 L695,413 L694,405 Z" fill="#E0A050"/><path d="M689,398 L703,398 L701,401 L691,401 Z" fill="#5A7AB0"/><path d="M694.5,407 L697.5,407 L697,413 L695,413 Z" fill="#D04030"/><path d="M685,402h4M685,405h5M685,409h4" stroke="#C8C8C8" stroke-width="0.8"/>
</svg>
<svg class="a" style="left:0;top:0" width="787" height="471" font-family="Liberation Sans, sans-serif">
<clipPath id="cpm"><rect x="201" y="79" width="409" height="370"/></clipPath><g clip-path="url(#cpm)">
<defs>
<radialGradient id="shm" cx="381.0" cy="204.3" r="79.5" gradientUnits="userSpaceOnUse">
<stop offset="0.849" stop-color="#000" stop-opacity="0.28"/><stop offset="0.899" stop-color="#000" stop-opacity="0.12"/><stop offset="1" stop-color="#000" stop-opacity="0"/></radialGradient>
<radialGradient id="fcm" cx="379.5" cy="202.3" r="67.5" gradientUnits="userSpaceOnUse">
<stop offset="0" stop-color="#E5E8EC"/><stop offset="0.75" stop-color="#E2E5E9"/><stop offset="1" stop-color="#ECEDF0"/></radialGradient>
<linearGradient id="grm" x1="0" y1="0" x2="1" y2="1"><stop offset="0" stop-color="#CFF4CA"/><stop offset="1" stop-color="#90DF8E"/></linearGradient>
<linearGradient id="orm" x1="0" y1="0" x2="1" y2="1"><stop offset="0" stop-color="#FFD9B8"/><stop offset="1" stop-color="#F8A671"/></linearGradient>
<linearGradient id="rdm" x1="0" y1="0" x2="1" y2="0"><stop offset="0" stop-color="#F87A7C"/><stop offset="1" stop-color="#E8363B"/></linearGradient>
<linearGradient id="ndm" x1="0" y1="0" x2="1" y2="0"><stop offset="0" stop-color="#8A8A8A"/><stop offset="0.5" stop-color="#5E5E5E"/><stop offset="1" stop-color="#3E3E3E"/></linearGradient>
<radialGradient id="knm" cx="0.45" cy="0.35" r="0.65"><stop offset="0" stop-color="#FBF8EC"/><stop offset="0.7" stop-color="#F3EEDA"/><stop offset="1" stop-color="#E6DFC6"/></radialGradient>
</defs>
<circle cx="381.0" cy="204.3" r="79.5" fill="url(#shm)"/>
<circle cx="379.5" cy="202.3" r="67.5" fill="url(#fcm)"/>
<path d="M379.50,269.80 A67.5,67.5 0 0 1 331.77,154.57 L336.30,159.10 A61.0875,61.0875 0 0 0 379.50,263.39 Z" fill="#CECCE1"/>
<path d="M331.77,154.57 A67.5,67.5 0 0 1 379.50,134.80 L379.50,144.79 A57.51,57.51 0 0 0 338.83,161.63 Z" fill="url(#grm)" stroke="#62B262" stroke-width="0.9"/>
<path d="M379.50,134.80 A67.5,67.5 0 0 1 427.23,154.57 L416.97,164.83 A52.987500000000004,52.987500000000004 0 0 0 379.50,149.31 Z" fill="url(#orm)" stroke="#C98A5A" stroke-width="0.9"/>
<path d="M427.23,154.57 A67.5,67.5 0 0 1 447.00,202.30 L427.02,202.30 A47.519999999999996,47.519999999999996 0 0 0 413.10,168.70 Z" fill="url(#rdm)" stroke="#3A1A1A" stroke-width="1.0"/>
<path d="M447.00,202.30 A67.5,67.5 0 0 1 379.50,269.80" fill="none" stroke="#7AB05E" stroke-width="0.9"/>
<path d="M379.50,269.80 A67.5,67.5 0 1 1 447.00,202.30" fill="none" stroke="#1A1A1A" stroke-width="1.0"/>
<line x1="379.50" y1="269.80" x2="379.50" y2="279.80" stroke="#000" stroke-width="1.0"/>
<line x1="363.74" y1="267.93" x2="362.58" y2="272.80" stroke="#000" stroke-width="1.0"/>
<line x1="348.86" y1="262.44" x2="344.32" y2="271.35" stroke="#000" stroke-width="1.0"/>
<line x1="335.66" y1="253.63" x2="332.42" y2="257.43" stroke="#000" stroke-width="1.0"/>
<line x1="324.89" y1="241.98" x2="316.80" y2="247.85" stroke="#000" stroke-width="1.0"/>
<line x1="317.14" y1="228.13" x2="312.52" y2="230.04" stroke="#000" stroke-width="1.0"/>
<line x1="312.83" y1="212.86" x2="302.95" y2="214.42" stroke="#000" stroke-width="1.0"/>
<line x1="312.21" y1="197.00" x2="307.22" y2="196.61" stroke="#000" stroke-width="1.0"/>
<line x1="315.30" y1="181.44" x2="305.79" y2="178.35" stroke="#000" stroke-width="1.0"/>
<line x1="321.95" y1="167.03" x2="317.68" y2="164.42" stroke="#000" stroke-width="1.0"/>
<line x1="331.77" y1="154.57" x2="324.70" y2="147.50" stroke="#000" stroke-width="1.0"/>
<line x1="344.23" y1="144.75" x2="341.62" y2="140.48" stroke="#000" stroke-width="1.0"/>
<line x1="358.64" y1="138.10" x2="355.55" y2="128.59" stroke="#000" stroke-width="1.0"/>
<line x1="374.20" y1="135.01" x2="373.81" y2="130.02" stroke="#000" stroke-width="1.0"/>
<line x1="390.06" y1="135.63" x2="391.62" y2="125.75" stroke="#000" stroke-width="1.0"/>
<line x1="405.33" y1="139.94" x2="407.24" y2="135.32" stroke="#000" stroke-width="1.0"/>
<line x1="419.18" y1="147.69" x2="425.05" y2="139.60" stroke="#000" stroke-width="1.0"/>
<line x1="430.83" y1="158.46" x2="434.63" y2="155.22" stroke="#000" stroke-width="1.0"/>
<line x1="439.64" y1="171.66" x2="448.55" y2="167.12" stroke="#000" stroke-width="1.0"/>
<line x1="445.13" y1="186.54" x2="450.00" y2="185.38" stroke="#000" stroke-width="1.0"/>
<line x1="447.00" y1="202.30" x2="457.00" y2="202.30" stroke="#000" stroke-width="1.0"/>
<text x="378.6" y="291.70" text-anchor="middle" font-size="12">0</text>
<text x="339.2" y="282.80" text-anchor="middle" font-size="12">10</text>
<text x="307" y="256.90" text-anchor="middle" font-size="12">20</text>
<text x="292.9" y="218.90" text-anchor="middle" font-size="12">30</text>
<text x="296" y="178.60" text-anchor="middle" font-size="12">40</text>
<text x="314.9" y="141.90" text-anchor="middle" font-size="12">50</text>
<text x="352.2" y="123.20" text-anchor="middle" font-size="12">60</text>
<text x="392" y="120.30" text-anchor="middle" font-size="12">70</text>
<text x="430.1" y="133.90" text-anchor="middle" font-size="12">80</text>
<text x="456.1" y="165.90" text-anchor="middle" font-size="12">90</text>
<text x="468.7" y="205.60" text-anchor="middle" font-size="12">100</text>
<ellipse cx="379.5" cy="210.3" rx="10.0" ry="6.5" fill="#5A5A5A" opacity="0.85"/>
<path d="M375.25,208.3 L383.75,208.3 L383.75,233.3 L381.1,237.3 L381.1,254.3 L377.9,254.3 L377.9,237.3 L375.25,233.3 Z" fill="url(#ndm)"/>
<circle cx="379.5" cy="201.70000000000002" r="11.0" fill="url(#knm)" stroke="#6CBF6A" stroke-width="1.1"/>
<text x="395.8" y="241" font-size="14" font-weight="bold" fill="#E25C2C">0.0</text>
<text x="362" y="311" font-size="14" font-weight="bold" fill="#000">name</text>
<rect x="281.5" y="104.5" width="6" height="6" fill="none" stroke="#0000FF" stroke-width="1.1"/>
<rect x="281.5" y="199.5" width="6" height="6" fill="none" stroke="#0000FF" stroke-width="1.1"/>
<rect x="281.5" y="294.5" width="6" height="6" fill="none" stroke="#0000FF" stroke-width="1.1"/>
<rect x="376.5" y="104.5" width="6" height="6" fill="none" stroke="#0000FF" stroke-width="1.1"/>
<rect x="376.5" y="294.5" width="6" height="6" fill="none" stroke="#0000FF" stroke-width="1.1"/>
<rect x="471.5" y="104.5" width="6" height="6" fill="none" stroke="#0000FF" stroke-width="1.1"/>
<rect x="471.5" y="199.5" width="6" height="6" fill="none" stroke="#0000FF" stroke-width="1.1"/>
<rect x="471.5" y="294.5" width="6" height="6" fill="none" stroke="#0000FF" stroke-width="1.1"/>
</g>
<clipPath id="cpo"><rect x="640" y="87" width="145" height="131"/></clipPath><g clip-path="url(#cpo)">
<defs>
<radialGradient id="sho" cx="710.05" cy="147.2" r="39.3" gradientUnits="userSpaceOnUse">
<stop offset="0.847" stop-color="#000" stop-opacity="0.28"/><stop offset="0.898" stop-color="#000" stop-opacity="0.12"/><stop offset="1" stop-color="#000" stop-opacity="0"/></radialGradient>
<radialGradient id="fco" cx="709.3" cy="146.2" r="33.3" gradientUnits="userSpaceOnUse">
<stop offset="0" stop-color="#E8EAED"/><stop offset="0.6" stop-color="#E0E3E7"/><stop offset="0.9" stop-color="#D6D9DE"/><stop offset="1" stop-color="#C9CCD2"/></radialGradient>
<linearGradient id="gro" x1="0" y1="0" x2="1" y2="1"><stop offset="0" stop-color="#CFF4CA"/><stop offset="1" stop-color="#90DF8E"/></linearGradient>
<linearGradient id="oro" x1="0" y1="0" x2="1" y2="1"><stop offset="0" stop-color="#FFD9B8"/><stop offset="1" stop-color="#F8A671"/></linearGradient>
<linearGradient id="rdo" x1="0" y1="0" x2="1" y2="0"><stop offset="0" stop-color="#F87A7C"/><stop offset="1" stop-color="#E8363B"/></linearGradient>
<linearGradient id="ndo" x1="0" y1="0" x2="1" y2="0"><stop offset="0" stop-color="#8A8A8A"/><stop offset="0.5" stop-color="#5E5E5E"/><stop offset="1" stop-color="#3E3E3E"/></linearGradient>
<radialGradient id="kno" cx="0.45" cy="0.35" r="0.65"><stop offset="0" stop-color="#FBF8EC"/><stop offset="0.7" stop-color="#F3EEDA"/><stop offset="1" stop-color="#E6DFC6"/></radialGradient>
</defs>
<circle cx="710.05" cy="147.2" r="39.3" fill="url(#sho)"/>
<circle cx="709.3" cy="146.2" r="33.3" fill="url(#fco)"/>
<path d="M709.30,179.50 A33.3,33.3 0 0 1 685.75,122.65 L687.99,124.89 A30.136499999999998,30.136499999999998 0 0 0 709.30,176.34 Z" fill="#CECCE1"/>
<path d="M685.75,122.65 A33.3,33.3 0 0 1 709.30,112.90 L709.30,117.83 A28.371599999999997,28.371599999999997 0 0 0 689.24,126.14 Z" fill="url(#gro)" stroke="#62B262" stroke-width="0.54"/>
<path d="M709.30,112.90 A33.3,33.3 0 0 1 732.85,122.65 L727.78,127.72 A26.1405,26.1405 0 0 0 709.30,120.06 Z" fill="url(#oro)" stroke="#C98A5A" stroke-width="0.54"/>
<path d="M732.85,122.65 A33.3,33.3 0 0 1 742.60,146.20 L732.74,146.20 A23.443199999999997,23.443199999999997 0 0 0 725.88,129.62 Z" fill="url(#rdo)" stroke="#3A1A1A" stroke-width="0.6"/>
<path d="M742.60,146.20 A33.3,33.3 0 0 1 709.30,179.50" fill="none" stroke="#7AB05E" stroke-width="0.9"/>
<path d="M709.30,179.50 A33.3,33.3 0 1 1 742.60,146.20" fill="none" stroke="#1A1A1A" stroke-width="1.0"/>
<line x1="709.30" y1="179.50" x2="709.30" y2="189.50" stroke="#000" stroke-width="1.0"/>
<line x1="701.53" y1="178.58" x2="700.36" y2="183.44" stroke="#000" stroke-width="1.0"/>
<line x1="694.18" y1="175.87" x2="689.64" y2="184.78" stroke="#000" stroke-width="1.0"/>
<line x1="687.67" y1="171.52" x2="684.43" y2="175.32" stroke="#000" stroke-width="1.0"/>
<line x1="682.36" y1="165.77" x2="674.27" y2="171.65" stroke="#000" stroke-width="1.0"/>
<line x1="678.53" y1="158.94" x2="673.92" y2="160.86" stroke="#000" stroke-width="1.0"/>
<line x1="676.41" y1="151.41" x2="666.53" y2="152.97" stroke="#000" stroke-width="1.0"/>
<line x1="676.10" y1="143.59" x2="671.12" y2="143.20" stroke="#000" stroke-width="1.0"/>
<line x1="677.63" y1="135.91" x2="668.12" y2="132.82" stroke="#000" stroke-width="1.0"/>
<line x1="680.91" y1="128.80" x2="676.64" y2="126.19" stroke="#000" stroke-width="1.0"/>
<line x1="685.75" y1="122.65" x2="678.68" y2="115.58" stroke="#000" stroke-width="1.0"/>
<line x1="691.90" y1="117.81" x2="689.29" y2="113.54" stroke="#000" stroke-width="1.0"/>
<line x1="699.01" y1="114.53" x2="695.92" y2="105.02" stroke="#000" stroke-width="1.0"/>
<line x1="706.69" y1="113.00" x2="706.30" y2="108.02" stroke="#000" stroke-width="1.0"/>
<line x1="714.51" y1="113.31" x2="716.07" y2="103.43" stroke="#000" stroke-width="1.0"/>
<line x1="722.04" y1="115.43" x2="723.96" y2="110.82" stroke="#000" stroke-width="1.0"/>
<line x1="728.87" y1="119.26" x2="734.75" y2="111.17" stroke="#000" stroke-width="1.0"/>
<line x1="734.62" y1="124.57" x2="738.42" y2="121.33" stroke="#000" stroke-width="1.0"/>
<line x1="738.97" y1="131.08" x2="747.88" y2="126.54" stroke="#000" stroke-width="1.0"/>
<line x1="741.68" y1="138.43" x2="746.54" y2="137.26" stroke="#000" stroke-width="1.0"/>
<line x1="742.60" y1="146.20" x2="752.60" y2="146.20" stroke="#000" stroke-width="1.0"/>
<text x="709" y="203.30" text-anchor="middle" font-size="12">0</text>
<text x="685.1" y="197.60" text-anchor="middle" font-size="12">10</text>
<text x="665.2" y="181.80" text-anchor="middle" font-size="12">20</text>
<text x="656.9" y="158.20" text-anchor="middle" font-size="12">30</text>
<text x="657.6" y="134.30" text-anchor="middle" font-size="12">40</text>
<text x="668.7" y="110.50" text-anchor="middle" font-size="12">50</text>
<text x="692.4" y="98.60" text-anchor="middle" font-size="12">60</text>
<text x="717.8" y="97.80" text-anchor="middle" font-size="12">70</text>
<text x="741" y="106.30" text-anchor="middle" font-size="12">80</text>
<text x="757.1" y="126.00" text-anchor="middle" font-size="12">90</text>
<text x="764" y="150.30" text-anchor="middle" font-size="12">100</text>
<ellipse cx="709.3" cy="150.2" rx="5.0" ry="3.25" fill="#5A5A5A" opacity="0.85"/>
<path d="M707.175,149.2 L711.425,149.2 L711.425,161.7 L710.0999999999999,163.7 L710.0999999999999,172.2 L708.5,172.2 L708.5,163.7 L707.175,161.7 Z" fill="url(#ndo)"/>
<circle cx="709.3" cy="145.89999999999998" r="5.5" fill="url(#kno)" stroke="#6CBF6A" stroke-width="0.77"/>
<text x="718" y="165" font-size="7.5" fill="#E06A48">0.0</text>
<text x="700" y="201.3" font-size="7.5" font-weight="bold" fill="#333">name</text>
<rect x="658.5" y="95.5" width="6" height="6" fill="none" stroke="#0000FF" stroke-width="1.1"/>
<rect x="658.5" y="143.5" width="6" height="6" fill="none" stroke="#0000FF" stroke-width="1.1"/>
<rect x="658.5" y="190.5" width="6" height="6" fill="none" stroke="#0000FF" stroke-width="1.1"/>
<rect x="706.5" y="95.5" width="6" height="6" fill="none" stroke="#0000FF" stroke-width="1.1"/>
<rect x="706.5" y="190.5" width="6" height="6" fill="none" stroke="#0000FF" stroke-width="1.1"/>
<rect x="753.5" y="95.5" width="6" height="6" fill="none" stroke="#0000FF" stroke-width="1.1"/>
<rect x="753.5" y="143.5" width="6" height="6" fill="none" stroke="#0000FF" stroke-width="1.1"/>
<rect x="753.5" y="190.5" width="6" height="6" fill="none" stroke="#0000FF" stroke-width="1.1"/>
</g></svg>
</body></html>
